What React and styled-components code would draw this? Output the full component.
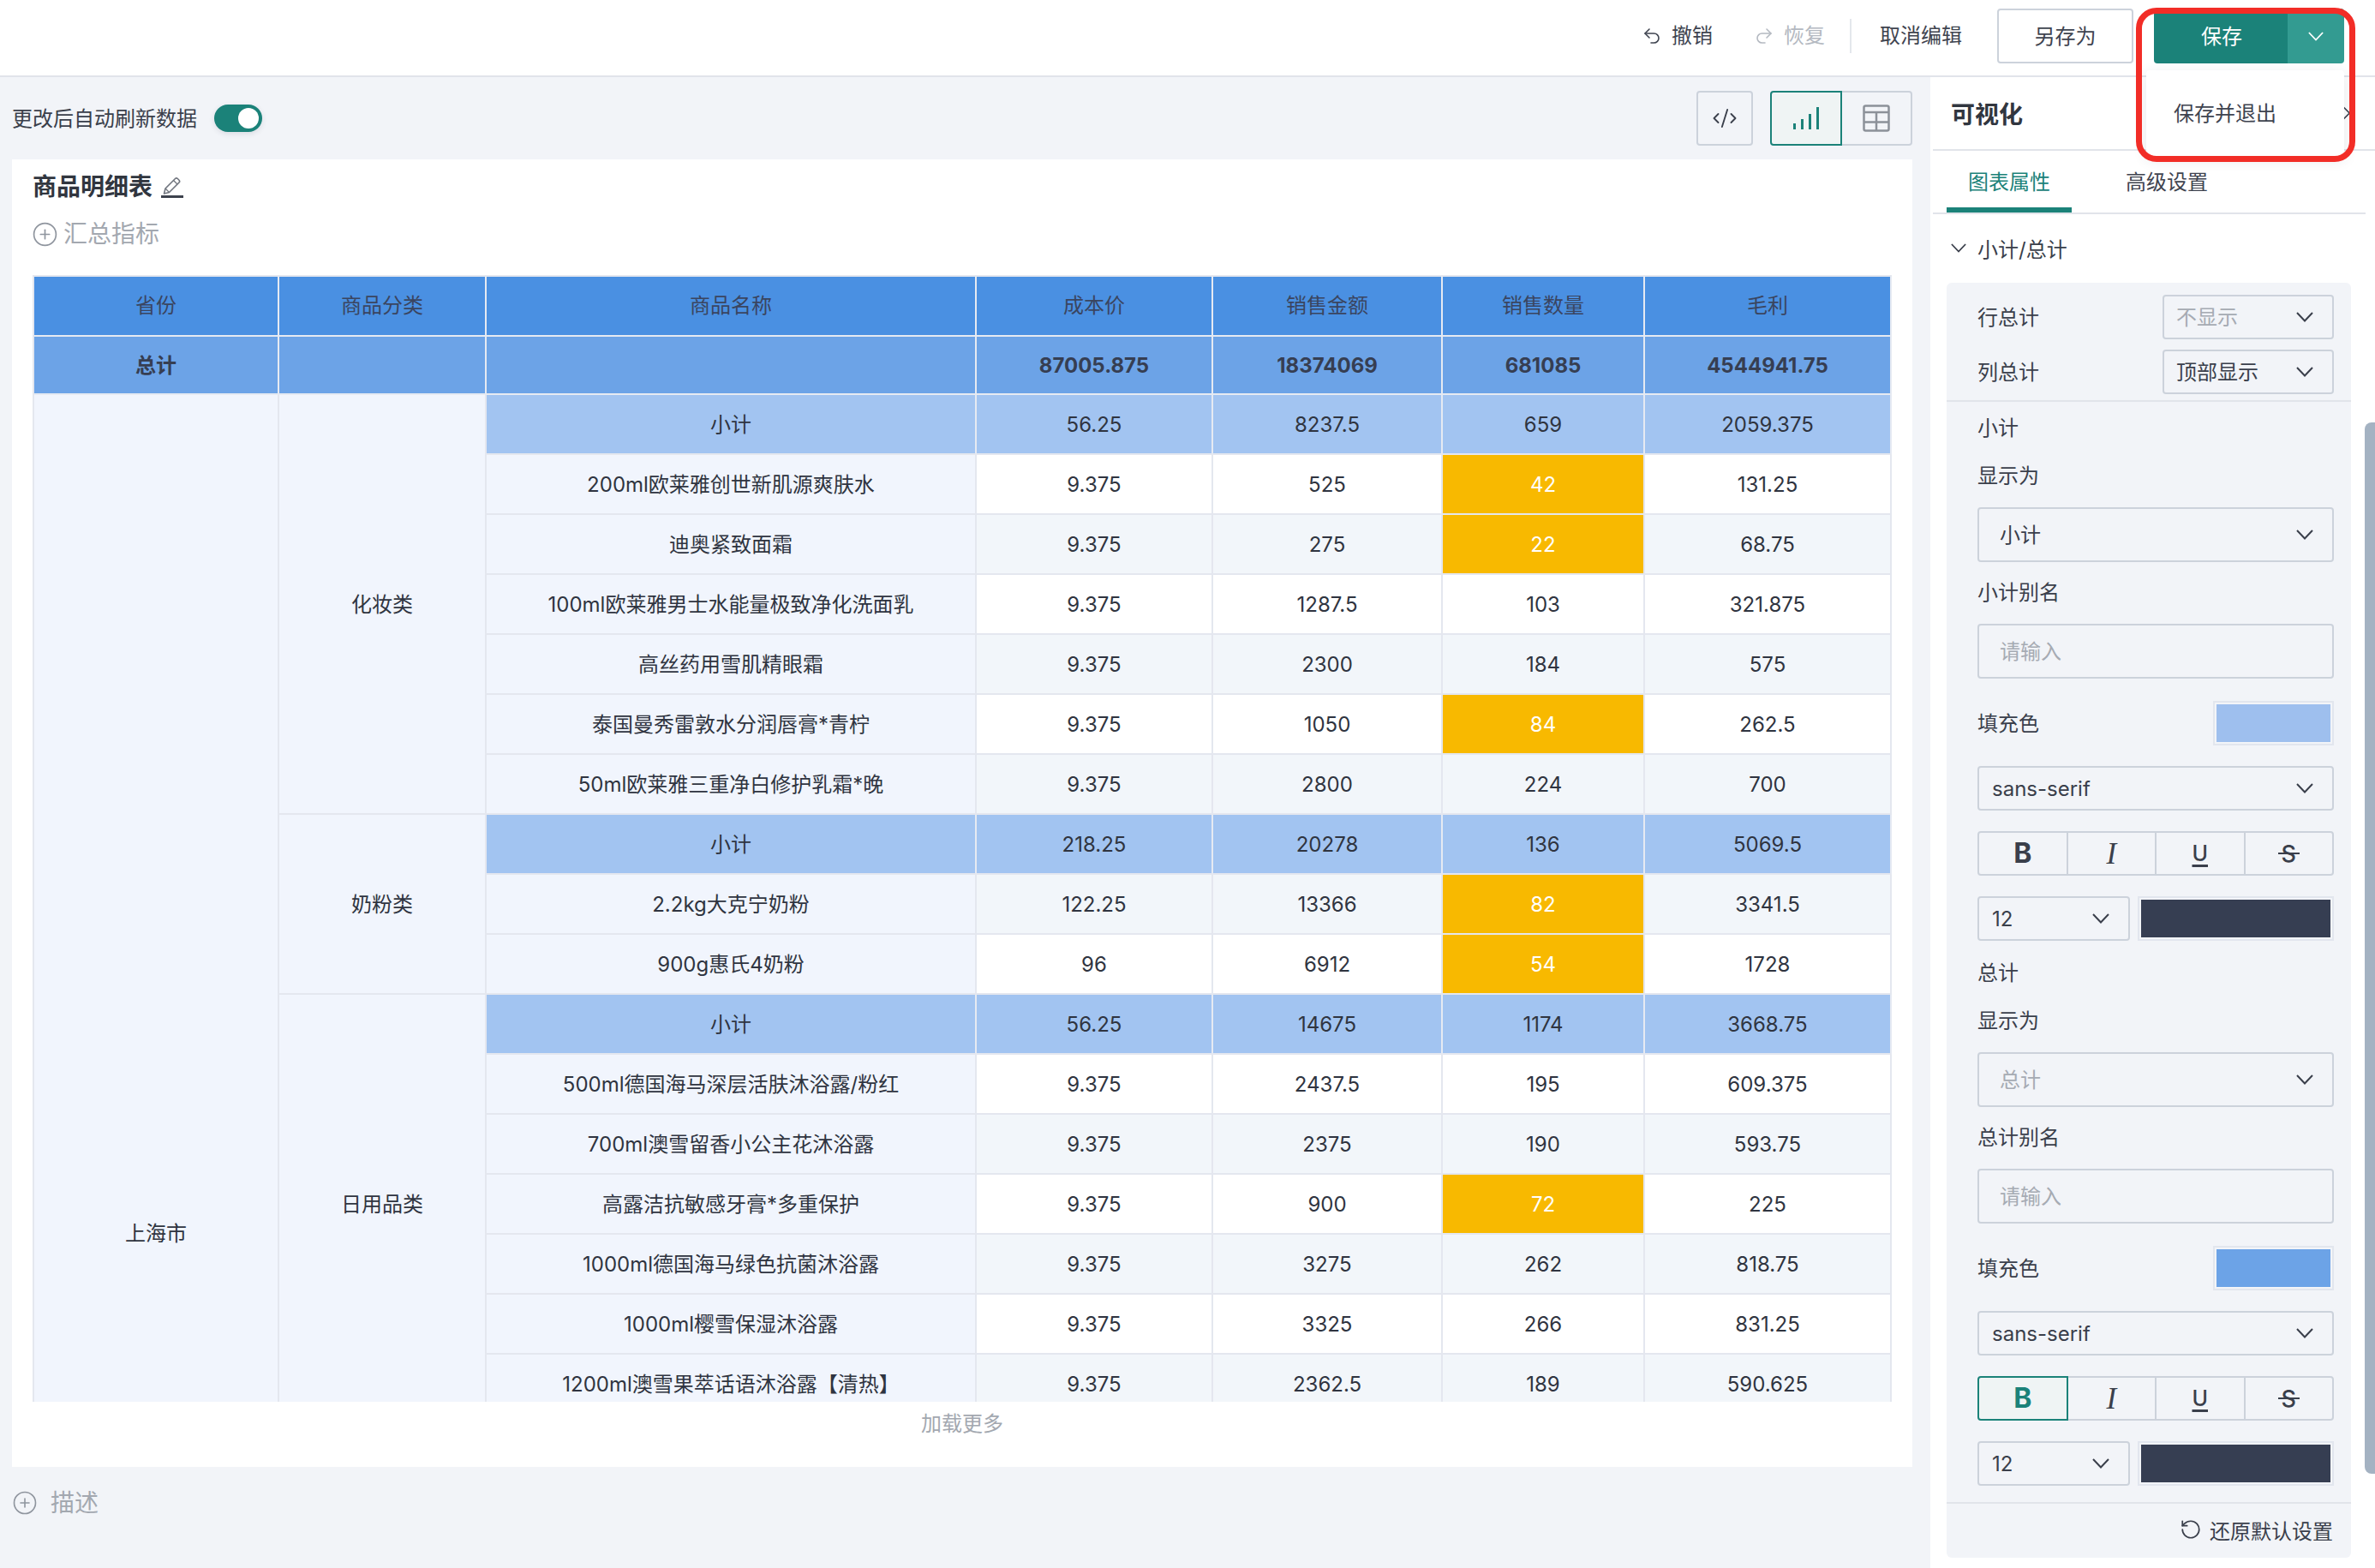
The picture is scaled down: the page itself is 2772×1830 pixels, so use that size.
import React from 'react';
import styled, { createGlobalStyle } from 'styled-components';
import { Undo2, Redo2, CodeXml, CirclePlus, RotateCcw, ChevronRight } from 'lucide-react';

const GlobalStyle = createGlobalStyle`
  html, body {
    margin: 0;
    padding: 0;
    background: #f2f4f8;
  }
  body {
    width: 2772px;
    height: 1830px;
    overflow: hidden;
    font-family: Inter, "Noto Sans CJK SC", sans-serif;
    font-size: 24px;
    color: #3a3f4b;
  }
  * {
    box-sizing: border-box;
  }
`;

const TEAL = '#1b8279';

const Page = styled.div`
  width: 2772px;
  height: 1830px;
  display: flex;
  flex-direction: column;
`;

// Barra superior
const TopBar = styled.header`
  height: 90px;
  flex: none;
  background: #fff;
  border-bottom: 2px solid #e1e4ea;
  display: flex;
  justify-content: flex-end;
  align-items: center;
  padding: 0 36px 4px 0;
`;

const Action = styled.div`
  display: flex;
  align-items: center;
  gap: 11px;
  line-height: 32px;
  margin-left: ${(p) => p.$left || 0}px;
  color: ${(p) => (p.$muted ? '#b4b9c1' : '#3f4450')};
`;

const BarDivider = styled.div`
  width: 2px;
  height: 40px;
  background: #e4e7ec;
  margin: 0 33px 0 29px;
`;

const GhostButton = styled.div`
  width: 159px;
  height: 64px;
  margin: 0 24px 0 41px;
  padding-bottom: 3px;
  border: 2px solid #ccd2db;
  border-radius: 4px;
  display: flex;
  align-items: center;
  justify-content: center;
  color: #3f4450;
`;

const SaveWrap = styled.div`
  position: relative;
  width: 222px;
  height: 64px;
  display: flex;
  border-radius: 4px;
`;

const SaveMain = styled.div`
  flex: 1;
  padding: 0 0 3px 2px;
  background: ${TEAL};
  color: #fff;
  display: flex;
  align-items: center;
  justify-content: center;
  border-radius: 4px 0 0 4px;
`;

const SaveArrow = styled.div`
  width: 66px;
  background: #339b91;
  display: flex;
  align-items: center;
  justify-content: center;
  border-radius: 0 4px 4px 0;
  color: #fff;
`;

const SaveMenu = styled.div`
  position: absolute;
  left: -9px;
  right: 0;
  top: 72px;
  height: 100px;
  padding: 0 0 4px 32px;
  background: #fff;
  border-radius: 4px;
  box-shadow: 0 4px 16px rgba(40, 50, 70, 0.12);
  display: flex;
  align-items: center;
  color: #3f4450;
  z-index: 5;
`;

// Marcação vermelha por cima do botão
const RedMark = styled.div`
  position: absolute;
  left: -21px;
  top: -1px;
  width: 256px;
  height: 180px;
  border: 7px solid #f22d27;
  border-radius: 24px;
  z-index: 6;
`;

const Body = styled.div`
  flex: 1;
  display: flex;
  min-height: 0;
`;

const Main = styled.main`
  width: 2253px;
  flex: none;
  background: #f2f4f8;
`;

const ToolRow = styled.div`
  height: 96px;
  display: flex;
  align-items: center;
  padding: 0 21px 0 14px;
`;

const ToggleLabel = styled.span`
  margin-top: -3px;
`;

const Toggle = styled.div`
  width: 56px;
  height: 32px;
  margin-left: 20px;
  border-radius: 16px;
  background: ${TEAL};
  padding: 4px;
  display: flex;
  justify-content: flex-end;
  box-shadow: 0 2px 6px rgba(40, 50, 70, 0.12);
`;

const Knob = styled.div`
  width: 24px;
  height: 24px;
  border-radius: 50%;
  background: #fff;
`;

const ToolButtons = styled.div`
  margin-left: auto;
  display: flex;
  gap: 20px;
`;

const ViewGroup = styled.div`
  display: flex;
`;

const ViewButton = styled.div`
  width: ${(p) => p.$w}px;
  height: 64px;
  border: 2px solid ${(p) => (p.$active ? TEAL : '#ccd2db')};
  border-left-width: ${(p) => (p.$flat ? 0 : 2)}px;
  border-radius: ${(p) => p.$radius || '4px'};
  background: ${(p) => (p.$active ? '#eff4f4' : 'transparent')};
  display: flex;
  align-items: center;
  justify-content: center;
  color: #3a3f4b;
`;

const Card = styled.section`
  height: 1526px;
  margin: 0 21px 0 14px;
  background: #fff;
  padding: 12px 24px 0;
`;

const Title = styled.h1`
  margin: 0;
  height: 40px;
  display: flex;
  align-items: center;
  gap: 10px;
  font-size: 28px;
  line-height: 40px;
  font-weight: 700;
  color: #31363f;
`;

const AddLink = styled.div`
  display: flex;
  align-items: center;
  gap: ${(p) => p.$gap}px;
  font-size: 28px;
  line-height: 40px;
  color: #a3a8b0;
  svg {
    color: #8f959e;
  }
`;

const SummaryLink = styled(AddLink)`
  margin: 15px 0 -1px -1px;
`;

const DescLink = styled(AddLink)`
  margin: 22px 0 0 14px;
`;

const TableWrap = styled.div`
  width: 2170px;
  height: 1315px;
  margin-top: 29px;
  overflow: hidden;
`;

const Table = styled.table`
  width: 2170px;
  table-layout: fixed;
  border-collapse: separate;
  border-spacing: 0;
  border-top: 2px solid #e4e7ef;
  border-left: 2px solid #e4e7ef;
  font-size: 24px;
  color: #2f3440;
`;

const Cell = styled.td`
  height: 70px;
  padding: 0;
  text-align: center;
  vertical-align: middle;
  font-weight: normal;
  border-right: 2px solid #e4e7ef;
  border-bottom: 2px solid #e4e7ef;
  background: ${(p) => p.$bg || '#fff'};
`;

const HeadCell = styled(Cell).attrs({ as: 'th' })`
  padding-bottom: 5px;
  background: #4a90e2;
  color: #3a4560;
  font-weight: normal;
  border-color: #e6eaf2;
`;

const TotalCell = styled(Cell)`
  height: 68px;
  padding-bottom: ${(p) => (p.$label ? 3 : 0)}px;
  background: #6ca3e7;
  color: #363e52;
  font-weight: 700;
  border-color: #e6eaf2;
`;

const SubCell = styled(Cell)`
  padding-bottom: ${(p) => (p.$label ? 3 : 0)}px;
  background: #a2c4f1;
  border-right-color: #e6eaf2;
`;

const RowHead = styled(Cell)`
  padding-bottom: 3px;
  background: #f1f5fd;
`;

const CategoryCell = styled(RowHead)`
  padding-bottom: 4px;
`;

const ProvinceCell = styled(RowHead)`
  padding: 765px 0 0;
`;

const ValueCell = styled(Cell)`
  background: ${(p) => (p.$hot ? '#f8b900' : p.$striped ? '#f2f6fa' : '#fff')};
  color: ${(p) => (p.$hot ? '#fff' : 'inherit')};
`;

const LoadMore = styled.div`
  margin-top: 10px;
  text-align: center;
  line-height: 32px;
  color: #a3a8b0;
`;

// Painel direito
const Panel = styled.aside`
  position: relative;
  flex: 1;
  background: #fff;
`;

const PanelHead = styled.div`
  height: 86px;
  margin-left: 3px;
  padding: 0 20px 0 21px;
  border-bottom: 2px solid #e1e4ea;
  display: flex;
  align-items: center;
  justify-content: space-between;
  font-size: 28px;
  font-weight: 700;
  color: #31363f;
`;

const Tabs = styled.div`
  height: 74px;
  margin: 0 11px 0 3px;
  padding-left: 16px;
  border-bottom: 2px solid #e1e4ea;
  display: flex;
  gap: 38px;
`;

const Tab = styled.div`
  height: 72px;
  padding: 21px 25px 13px;
  line-height: 32px;
  border-bottom: 6px solid ${(p) => (p.$active ? TEAL : 'transparent')};
  color: ${(p) => (p.$active ? TEAL : '#3f4450')};
`;

const SectionHead = styled.div`
  height: 80px;
  display: flex;
  align-items: center;
  gap: 13px;
  padding: 0 0 2px 24px;
`;

const SettingsBox = styled.div`
  width: 472px;
  height: 1488px;
  margin-left: 19px;
  background: #f2f4f8;
  border-radius: 6px;
  display: flex;
  flex-direction: column;
`;

const TotalsArea = styled.div`
  padding: 14px 20px 7px 36px;
  border-bottom: 2px solid #e1e4ea;
  display: flex;
  flex-direction: column;
  gap: 12px;
`;

const TotalRow = styled.div`
  display: flex;
  align-items: center;
  justify-content: space-between;
`;

const RowText = styled.span`
  margin-top: -3px;
`;

const Group = styled.div`
  padding: 0 20px 0 36px;
  margin-top: ${(p) => p.$top}px;
  display: flex;
  flex-direction: column;
`;

const Label = styled.div`
  line-height: 32px;
  margin-top: ${(p) => p.$top || 0}px;
`;

const Select = styled.div`
  height: ${(p) => p.$h}px;
  width: ${(p) => (p.$w ? `${p.$w}px` : 'auto')};
  margin-top: ${(p) => p.$top || 0}px;
  padding: 0 22px 0 ${(p) => p.$pad}px;
  border: 2px solid #ccd2db;
  border-radius: 4px;
  display: flex;
  align-items: center;
  justify-content: space-between;
  color: ${(p) => (p.$muted ? '#a6abb3' : '#3a3f4b')};
  svg {
    color: #3a3f4b;
  }
`;

const TextInput = styled.div`
  height: 64px;
  margin-top: 20px;
  padding: 0 0 3px 24px;
  border: 2px solid #ccd2db;
  border-radius: 4px;
  display: flex;
  align-items: center;
  color: #a6abb3;
`;

const FillRow = styled.div`
  height: 52px;
  margin-top: 26px;
  display: flex;
  align-items: center;
  justify-content: space-between;
`;

const Swatch = styled.div`
  width: ${(p) => p.$w}px;
  height: 52px;
  padding: 2px;
  border: 2px solid #e2e6ee;
  background: ${(p) => p.$color} content-box;
`;

const FormatGroup = styled.div`
  height: 52px;
  margin-top: 24px;
  display: flex;
`;

const FormatCell = styled.div`
  flex: 1;
  margin-left: -2px;
  border: 2px solid ${(p) => (p.$active ? TEAL : '#ccd2db')};
  background: ${(p) => (p.$active ? '#eff4f4' : 'transparent')};
  color: ${(p) => (p.$active ? TEAL : '#3a3f4b')};
  position: ${(p) => (p.$active ? 'relative' : 'static')};
  display: flex;
  align-items: center;
  justify-content: center;
  font-size: 30px;
  line-height: 1;
  &:first-child {
    margin-left: 0;
    border-radius: 4px 0 0 4px;
  }
  &:last-child {
    border-radius: 0 4px 4px 0;
  }
`;

const BoldMark = styled.b`
  font-size: 32px;
  font-weight: 700;
`;

const ItalicMark = styled.i`
  font-family: "Liberation Serif", serif;
  font-size: 35px;
`;

const UnderMark = styled.span`
  font-size: 25px;
  font-weight: 500;
  text-decoration: underline;
  text-decoration-thickness: 3px;
  text-underline-offset: 4px;
`;

const StrikeMark = styled.span`
  position: relative;
  font-size: 27px;
  font-weight: 500;
  &::after {
    content: '';
    position: absolute;
    left: -4px;
    right: -4px;
    top: 50%;
    height: 2px;
    margin-top: -1px;
    background: currentColor;
  }
`;

const SizeRow = styled.div`
  margin-top: 24px;
  display: flex;
  justify-content: space-between;
`;

const Footer = styled.div`
  flex: 1;
  margin-top: 19px;
  padding: 0 21px 3px 0;
  border-top: 2px solid #e1e4ea;
  display: flex;
  align-items: center;
  justify-content: flex-end;
  gap: 9px;
`;

const Scrollbar = styled.div`
  position: absolute;
  right: 0;
  top: 403px;
  width: 12px;
  height: 1227px;
  background: #a4b2c2;
  border-radius: 8px 0 0 8px;
`;

// Ícones desenhados à mão
const Chevron = ({ w = 20, h = 12 }) => (
  <svg width={w} height={h} viewBox="0 0 20 12" fill="none" stroke="currentColor" strokeWidth="2">
    <polyline points="1,1 10,10.5 19,1" />
  </svg>
);

const BarsIcon = () => (
  <svg width="32" height="28" viewBox="0 0 32 28" fill={TEAL}>
    <rect x="1" y="20" width="3" height="7" />
    <rect x="10" y="15" width="3" height="12" />
    <rect x="19" y="9" width="3" height="18" />
    <rect x="28" y="1" width="3" height="26" />
  </svg>
);

const GridIcon = () => (
  <svg width="32" height="32" viewBox="0 0 32 32" fill="none" stroke="#8c9199" strokeWidth="2.5">
    <rect x="1.5" y="1.5" width="29" height="29" rx="2" />
    <path d="M1.5 9h29M1.5 20.5h29M16 9v21.5" />
  </svg>
);

const PencilIcon = () => (
  <svg width="26" height="25" viewBox="0 0 26 25" fill="none">
    <path d="M3.5 20 5 14 16.5 2.5a2 2 0 0 1 2.8 0l1.7 1.7a2 2 0 0 1 0 2.8L9.5 18.5Z" stroke="#70757e" strokeWidth="1.6" strokeLinejoin="round" />
    <path d="M14.5 4.5 19 9M5 14l4.5 4.5" stroke="#70757e" strokeWidth="1.4" />
    <rect x="0" y="22" width="26" height="3" fill="#3d424d" />
  </svg>
);

const header = ['省份', '商品分类', '商品名称', '成本价', '销售金额', '销售数量', '毛利'];
const widths = [286, 242, 572, 276, 268, 236, 288];

const groups = [
  {
    name: '化妆类',
    sub: ['56.25', '8237.5', 659, '2059.375'],
    rows: [
      ['200ml欧莱雅创世新肌源爽肤水', '9.375', '525', 42, '131.25'],
      ['迪奥紧致面霜', '9.375', '275', 22, '68.75'],
      ['100ml欧莱雅男士水能量极致净化洗面乳', '9.375', '1287.5', 103, '321.875'],
      ['高丝药用雪肌精眼霜', '9.375', '2300', 184, '575'],
      ['泰国曼秀雷敦水分润唇膏*青柠', '9.375', '1050', 84, '262.5'],
      ['50ml欧莱雅三重净白修护乳霜*晚', '9.375', '2800', 224, '700'],
    ],
  },
  {
    name: '奶粉类',
    sub: ['218.25', '20278', 136, '5069.5'],
    rows: [
      ['2.2kg大克宁奶粉', '122.25', '13366', 82, '3341.5'],
      ['900g惠氏4奶粉', '96', '6912', 54, '1728'],
    ],
  },
  {
    name: '日用品类',
    sub: ['56.25', '14675', 1174, '3668.75'],
    rows: [
      ['500ml德国海马深层活肤沐浴露/粉红', '9.375', '2437.5', 195, '609.375'],
      ['700ml澳雪留香小公主花沐浴露', '9.375', '2375', 190, '593.75'],
      ['高露洁抗敏感牙膏*多重保护', '9.375', '900', 72, '225'],
      ['1000ml德国海马绿色抗菌沐浴露', '9.375', '3275', 262, '818.75'],
      ['1000ml樱雪保湿沐浴露', '9.375', '3325', 266, '831.25'],
      ['1200ml澳雪果萃话语沐浴露【清热】', '9.375', '2362.5', 189, '590.625'],
    ],
  },
];

const renderRows = () => {
  let index = 0;
  const out = [];
  groups.forEach((group, g) => {
    out.push(
      <tr key={group.name}>
        {g === 0 && <ProvinceCell rowSpan={17}>上海市</ProvinceCell>}
        <CategoryCell rowSpan={group.rows.length + 1}>{group.name}</CategoryCell>
        <SubCell $label>小计</SubCell>
        {group.sub.map((v, i) => (
          <SubCell key={i}>{v}</SubCell>
        ))}
      </tr>
    );
    index += 1;
    group.rows.forEach(([name, cost, amount, qty, profit]) => {
      const striped = index % 2 === 0;
      out.push(
        <tr key={name}>
          <RowHead>{name}</RowHead>
          <ValueCell $striped={striped}>{cost}</ValueCell>
          <ValueCell $striped={striped}>{amount}</ValueCell>
          <ValueCell $striped={striped} $hot={qty < 100}>{qty}</ValueCell>
          <ValueCell $striped={striped}>{profit}</ValueCell>
        </tr>
      );
      index += 1;
    });
  });
  return out;
};

const DetailTable = () => (
  <TableWrap>
    <Table>
      <colgroup>
        {widths.map((w, i) => (
          <col key={i} width={w} />
        ))}
      </colgroup>
      <thead>
        <tr>
          {header.map((h) => (
            <HeadCell key={h}>{h}</HeadCell>
          ))}
        </tr>
      </thead>
      <tbody>
        <tr>
          <TotalCell $label>总计</TotalCell>
          <TotalCell />
          <TotalCell />
          <TotalCell>87005.875</TotalCell>
          <TotalCell>18374069</TotalCell>
          <TotalCell>681085</TotalCell>
          <TotalCell>4544941.75</TotalCell>
        </tr>
        {renderRows()}
      </tbody>
    </Table>
  </TableWrap>
);

const TextStyleGroup = ({ fill, boldActive, label, alias, muted }) => (
  <>
    <Label>{label}</Label>
    <Label $top={24}>显示为</Label>
    <Select $h={64} $pad={24} $top={20} $muted={muted}>
      <RowText>{label}</RowText>
      <Chevron />
    </Select>
    <Label $top={20}>{alias}</Label>
    <TextInput>请输入</TextInput>
    <FillRow>
      <RowText>填充色</RowText>
      <Swatch $w={141} $color={fill} />
    </FillRow>
    <Select $h={52} $pad={15} $top={24}>
      sans-serif
      <Chevron />
    </Select>
    <FormatGroup>
      <FormatCell $active={boldActive}><BoldMark>B</BoldMark></FormatCell>
      <FormatCell><ItalicMark>I</ItalicMark></FormatCell>
      <FormatCell><UnderMark>U</UnderMark></FormatCell>
      <FormatCell><StrikeMark>S</StrikeMark></FormatCell>
    </FormatGroup>
    <SizeRow>
      <Select $h={52} $w={178} $pad={15}>
        12
        <Chevron />
      </Select>
      <Swatch $w={229} $color="#363e52" />
    </SizeRow>
  </>
);

const App = () => (
  <Page>
    <GlobalStyle />
    <TopBar>
      <Action>
        <Undo2 size={24} strokeWidth={1.6} />
        撤销
      </Action>
      <Action $left={48} $muted>
        <Redo2 size={24} strokeWidth={1.6} />
        恢复
      </Action>
      <BarDivider />
      <Action>取消编辑</Action>
      <GhostButton>另存为</GhostButton>
      <SaveWrap>
        <SaveMain>保存</SaveMain>
        <SaveArrow>
          <Chevron w={18} h={11} />
        </SaveArrow>
        <SaveMenu>保存并退出</SaveMenu>
        <RedMark />
      </SaveWrap>
    </TopBar>
    <Body>
      <Main>
        <ToolRow>
          <ToggleLabel>更改后自动刷新数据</ToggleLabel>
          <Toggle>
            <Knob />
          </Toggle>
          <ToolButtons>
            <ViewButton $w={66}>
              <CodeXml size={30} strokeWidth={1.5} />
            </ViewButton>
            <ViewGroup>
              <ViewButton $w={84} $active $radius="4px 0 0 4px">
                <BarsIcon />
              </ViewButton>
              <ViewButton $w={82} $flat $radius="0 4px 4px 0">
                <GridIcon />
              </ViewButton>
            </ViewGroup>
          </ToolButtons>
        </ToolRow>
        <Card>
          <Title>
            商品明细表
            <PencilIcon />
          </Title>
          <SummaryLink $gap={6}>
            <CirclePlus size={31} strokeWidth={1.3} />
            汇总指标
          </SummaryLink>
          <DetailTable />
          <LoadMore>加载更多</LoadMore>
        </Card>
        <DescLink $gap={15}>
          <CirclePlus size={30} strokeWidth={1.3} />
          描述
        </DescLink>
      </Main>
      <Panel>
        <PanelHead>
          可视化
          <ChevronRight size={26} strokeWidth={1.6} color="#3a3f4b" />
        </PanelHead>
        <Tabs>
          <Tab $active>图表属性</Tab>
          <Tab>高级设置</Tab>
        </Tabs>
        <SectionHead>
          <Chevron w={18} h={11} />
          小计/总计
        </SectionHead>
        <SettingsBox>
          <TotalsArea>
            <TotalRow>
              <RowText>行总计</RowText>
              <Select $h={52} $w={200} $pad={14} $muted>
                <RowText>不显示</RowText>
                <Chevron />
              </Select>
            </TotalRow>
            <TotalRow>
              <RowText>列总计</RowText>
              <Select $h={52} $w={200} $pad={14}>
                <RowText>顶部显示</RowText>
                <Chevron />
              </Select>
            </TotalRow>
          </TotalsArea>
          <Group $top={15}>
            <TextStyleGroup label="小计" alias="小计别名" fill="#9ebfee" />
          </Group>
          <Group $top={22}>
            <TextStyleGroup label="总计" alias="总计别名" fill="#6ca3e7" boldActive muted />
          </Group>
          <Footer>
            <RotateCcw size={26} strokeWidth={1.6} />
            还原默认设置
          </Footer>
        </SettingsBox>
        <Scrollbar />
      </Panel>
    </Body>
  </Page>
);

export default App;
